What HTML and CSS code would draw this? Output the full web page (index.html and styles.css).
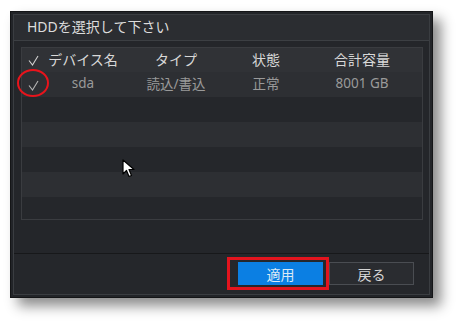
FILE: index.html
```html
<!DOCTYPE html>
<html>

<head>
    <meta charset="UTF-8" />
    <title>HDD選択</title>
    <link rel="stylesheet" href="styles.css">
</head>

<body>
    <div class="dialog">
        <div class="inner">
            <div class="title">HDDを選択して下さい</div>
            <div class="content">
                <div class="table">
                    <div class="row head">
                        <span class="check">
                            <svg width="11" height="11" viewBox="0 0 11 11"><polyline points="1,5.5 4.5,10 10,1" fill="none" stroke="#cfcfcf" stroke-width="1.1"/></svg>
                        </span>
                        <span>デバイス名</span>
                        <span>タイプ</span>
                        <span>状態</span>
                        <span>合計容量</span>
                    </div>
                    <div class="row light">
                        <span class="check">
                            <svg width="11" height="11" viewBox="0 0 11 11"><polyline points="1,5.5 4.5,10 10,1" fill="none" stroke="#b4b4b4" stroke-width="1.1"/></svg>
                        </span>
                        <span>sda</span>
                        <span>読込/書込</span>
                        <span>正常</span>
                        <span>8001 GB</span>
                    </div>
                    <div class="row"></div>
                    <div class="row light"></div>
                    <div class="row"></div>
                    <div class="row light"></div>
                    <div class="row"></div>
                </div>
            </div>
            <div class="footer">
                <button class="btn apply">適用</button>
                <button class="btn back">戻る</button>
            </div>
        </div>
    </div>

    <div class="circle"></div>
    <div class="highlight"></div>
    <svg class="cursor" width="14" height="20" viewBox="0 0 14 20">
        <path d="M1,1 L1,15 L4.5,11.5 L7,17.5 L9.5,16.5 L7,10.5 L12,10.5 Z" fill="#fff" stroke="#000" stroke-width="1.2" stroke-linejoin="round"/>
    </svg>
</body>

</html>
```

FILE: styles.css
```css
* {
    box-sizing: border-box;
    margin: 0;
    padding: 0;
}

body {
    position: relative;
    width: 465px;
    height: 330px;
    background: #ffffff;
    font-family: "Noto Sans", "Noto Sans CJK JP", sans-serif;
}

.dialog {
    position: absolute;
    left: 10px;
    top: 11px;
    width: 423px;
    height: 287px;
    background: #222428;
    border: 1px solid #141517;
    padding: 2px;
    box-shadow: 8px 8px 12px rgba(0, 0, 0, 0.45);
}

.inner {
    height: 100%;
    border: 1px solid #3a3d41;
    display: flex;
    flex-direction: column;
}

.title {
    height: 26px;
    flex: none;
    background: #2b2d31;
    border-bottom: 1px solid #3c3f43;
    color: #dcdcdc;
    font-size: 14px;
    line-height: 23px;
    padding-left: 13px;
}

.content {
    flex: 1;
    padding: 6px 6px 0 7px;
    background: #24262a;
}

.table {
    height: 173px;
    border: 1px solid #3a3c40;
    overflow: hidden;
}

.row {
    display: grid;
    grid-template-columns: 22px 78px 108px 72px 1fr;
    align-items: center;
    height: 25px;
    padding-bottom: 3px;
    background: #25272b;
    color: #9a9a9a;
    font-size: 13.5px;
}

.row.light {
    background: #2d2f33;
}

.row.head {
    height: 24px;
    background: #303236;
    color: #d8d8d8;
    font-size: 14px;
}

.row span {
    text-align: center;
    white-space: nowrap;
}

.check {
    display: flex;
    justify-content: center;
    padding-top: 4px;
}

.footer {
    height: 41px;
    flex: none;
    background: #25272b;
    border-top: 1px solid #17181a;
    display: flex;
    justify-content: flex-end;
    gap: 6px;
    padding: 8px 15px 0 0;
}

.btn {
    width: 85px;
    height: 23px;
    font-family: "Noto Sans CJK JP", sans-serif;
    font-size: 14px;
    line-height: 20px;
    border: 1px solid #4a4d52;
    background: #2a2c30;
    color: #d6d6d6;
}

.btn.apply {
    background: #0b7fe3;
    border-color: #0b7fe3;
    color: #dce9f5;
}

.circle {
    position: absolute;
    left: 17px;
    top: 69px;
    width: 32px;
    height: 28px;
    border: 2.5px solid #e8141c;
    border-radius: 50%;
}

.highlight {
    position: absolute;
    left: 227px;
    top: 257px;
    width: 102px;
    height: 33px;
    border: 3px solid #e3141e;
}

.cursor {
    position: absolute;
    left: 122px;
    top: 159px;
}
```
